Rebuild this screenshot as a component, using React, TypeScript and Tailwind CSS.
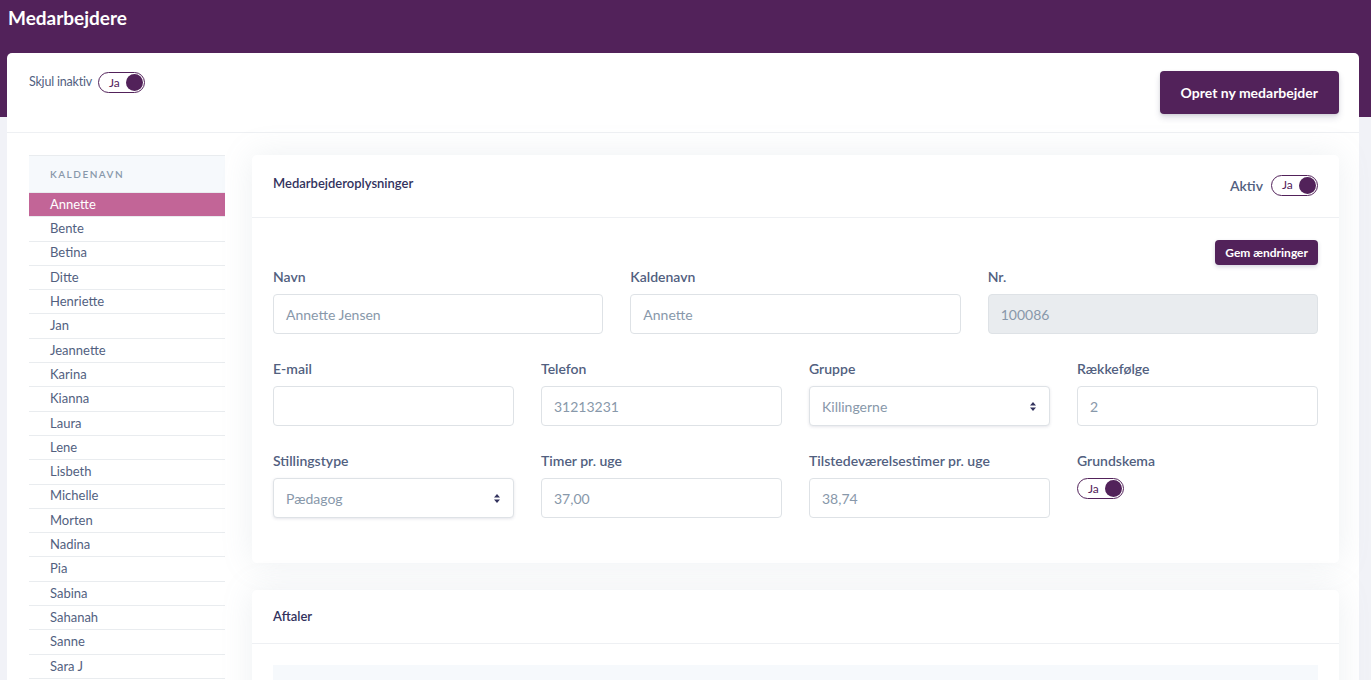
import React from "react";

const names = ["Annette","Bente","Betina","Ditte","Henriette","Jan","Jeannette","Karina","Kianna","Laura","Lene","Lisbeth","Michelle","Morten","Nadina","Pia","Sabina","Sahanah","Sanne","Sara J"];

function Toggle() {
  return (
    <div className="flex items-center justify-between w-[47px] h-[21px] rounded-full border border-[#52225a] pl-[10px] pr-[1px] bg-white">
      <span className="text-[12px] text-[#52225a] leading-none">Ja</span>
      <span className="w-[17px] h-[17px] rounded-full bg-[#52225a]" />
    </div>
  );
}

function Label({ children }: { children: React.ReactNode }) {
  return <div className="text-[14px] font-semibold text-[#525f7f] h-[18px] leading-[18px] mt-[2px] mb-[8px]">{children}</div>;
}

function Field({ label, value, disabled, select }: { label: string; value: string; disabled?: boolean; select?: boolean }) {
  return (
    <div className="flex flex-col">
      <Label>{label}</Label>
      <div className={`h-[40px] rounded-[4px] border border-[#dee2e6] flex items-center justify-between px-[12px] ${disabled ? "bg-[#e9ecef]" : "bg-white"} ${select ? "shadow-[0_1px_3px_rgba(50,50,93,0.12)]" : ""}`}>
        <span className="text-[14px] text-[#8898aa]">{value}</span>
        {select && (
          <svg width="8" height="11" viewBox="0 0 8 11"><path d="M4 1 L7 4.5 H1 Z M4 10 L7 6.5 H1 Z" fill="#32325d" /></svg>
        )}
      </div>
    </div>
  );
}

export default function App() {
  return (
    <div className="min-h-[680px] bg-[#f1f2f7] relative overflow-hidden" style={{ fontFamily: "Lato, 'Open Sans', sans-serif" }}>
      <div className="absolute top-0 left-0 right-0 h-[117px] bg-[#52225a]" />
      <div className="relative">
        <div className="h-[53px] px-[8px] pt-[5px] text-white text-[19px] font-bold leading-[26px]">Medarbejdere</div>
        <div className="ml-[7px] mr-[12px] bg-white rounded-[5px]">
          <div className="flex justify-between items-start pl-[22px] pr-[20px] pt-[18px] h-[80px] border-b border-[#eef0f3]">
            <div className="flex items-center gap-[6px] pt-[1px]">
              <span className="text-[12.5px] tracking-[-0.2px] text-[#525f7f]">Skjul inaktiv</span>
              <Toggle />
            </div>
            <button className="h-[43px] px-[21px] rounded-[4px] bg-[#52225a] text-white text-[14px] font-bold shadow-[0_4px_6px_rgba(50,50,93,0.15),0_1px_3px_rgba(0,0,0,0.1)]">Opret ny medarbejder</button>
          </div>
          <div className="flex gap-[27px] pl-[22px] pr-[20px] pt-[22px]">
            <div className="w-[196px] shrink-0">
              <div className="h-[38px] bg-[#f6f9fc] border-y border-[#e9ecef] flex items-center px-[21px] text-[10px] tracking-[1.5px] text-[#8898aa] font-semibold">KALDENAVN</div>
              {names.map((n, i) => (
                <div key={n} className={`h-[24.3px] flex items-center px-[21px] text-[13px] border-b border-[#e9ecef] ${i === 0 ? "bg-[#c26597] text-white" : "text-[#525f7f]"}`}>{n}</div>
              ))}
            </div>
            <div className="flex-1 flex flex-col gap-[27px]">
              <div className="bg-white rounded-[5px] shadow-[0_0_2rem_0_rgba(136,152,170,0.15)]">
                <div className="h-[63px] flex items-center justify-between px-[21px] pb-[5px] border-b border-[#eef0f3]">
                  <span className="text-[13px] font-semibold text-[#32325d]">Medarbejderoplysninger</span>
                  <div className="flex items-center gap-[8px] pt-[3px]">
                    <span className="text-[14px] font-semibold text-[#525f7f]">Aktiv</span>
                    <Toggle />
                  </div>
                </div>
                <div className="px-[21px] pt-[22px] pb-[45px]">
                  <div className="flex justify-end">
                    <button className="h-[25px] px-[10px] rounded-[4px] bg-[#52225a] text-white text-[12px] font-bold shadow-[0_2px_4px_rgba(50,50,93,0.2)]">Gem ændringer</button>
                  </div>
                  <div className="grid grid-cols-3 gap-x-[27px] mt-[1px]">
                    <Field label="Navn" value="Annette Jensen" />
                    <Field label="Kaldenavn" value="Annette" />
                    <Field label="Nr." value="100086" disabled />
                  </div>
                  <div className="grid grid-cols-4 gap-x-[27px] mt-[24px]">
                    <Field label="E-mail" value="" />
                    <Field label="Telefon" value="31213231" />
                    <Field label="Gruppe" value="Killingerne" select />
                    <Field label="Rækkefølge" value="2" />
                  </div>
                  <div className="grid grid-cols-4 gap-x-[27px] mt-[24px]">
                    <Field label="Stillingstype" value="Pædagog" select />
                    <Field label="Timer pr. uge" value="37,00" />
                    <Field label="Tilstedeværelsestimer pr. uge" value="38,74" />
                    <div className="flex flex-col">
                      <Label>Grundskema</Label>
                      <Toggle />
                    </div>
                  </div>
                </div>
              </div>
              <div className="bg-white rounded-[5px] shadow-[0_0_2rem_0_rgba(136,152,170,0.15)] h-[200px]">
                <div className="h-[54px] flex items-center px-[21px] border-b border-[#eef0f3]">
                  <span className="text-[13px] font-semibold text-[#32325d]">Aftaler</span>
                </div>
                <div className="px-[21px] pt-[21px]">
                  <div className="h-[60px] bg-[#f6f9fc]" />
                </div>
              </div>
            </div>
          </div>
        </div>
      </div>
    </div>
  );
}
